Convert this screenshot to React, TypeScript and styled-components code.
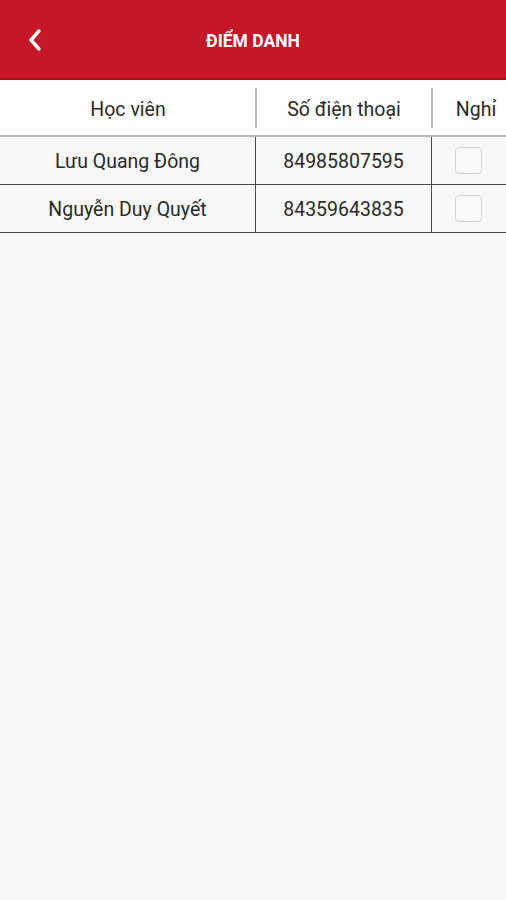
import React from 'react';
import styled, { createGlobalStyle } from 'styled-components';

const GlobalStyle = createGlobalStyle`
  html, body {
    margin: 0;
    padding: 0;
    background: #f8f8f8;
  }
  body {
    font-family: Roboto, "Noto Sans", "Liberation Sans", sans-serif;
  }
`;

interface Student {
  name: string;
  phone: string;
}

const students: Student[] = [
  { name: 'Lưu Quang Đông', phone: '84985807595' },
  { name: 'Nguyễn Duy Quyết', phone: '84359643835' },
];

const Page = styled.div`
  width: 506px;
  min-height: 900px;
  background: #f8f8f8;
  overflow: hidden;
`;

const TopBar = styled.header`
  height: 78px;
  background: #c41828;
  border-bottom: 2px solid #a8121f;
  display: flex;
  align-items: center;
  justify-content: center;
  position: relative;
`;

const BackButton = styled.button`
  position: absolute;
  left: 20px;
  top: 24px;
  width: 30px;
  height: 32px;
  padding: 0;
  border: 0;
  background: transparent;
  display: flex;
  align-items: center;
  justify-content: center;
`;

const Title = styled.h1`
  margin: 0;
  margin-top: 4px;
  color: #fff;
  font-size: 17.5px;
  font-weight: 700;
`;

const Table = styled.div`
  width: 520px;
`;

const Row = styled.div<{ $head?: boolean }>`
  display: grid;
  grid-template-columns: 256px 176px 88px;
  height: ${p => (p.$head ? '55px' : '47px')};
  background: ${p => (p.$head ? '#fdfdfd' : 'transparent')};
  border-bottom: ${p => (p.$head ? '2px solid #b8b8b8' : '1px solid #4a4a4a')};
`;

const Cell = styled.div<{ $head?: boolean; $divider?: boolean }>`
  display: flex;
  align-items: center;
  justify-content: center;
  font-size: 19.5px;
  color: #2a2a2a;
  position: relative;
  border-right: ${p => (p.$divider && !p.$head ? '1px solid #4a4a4a' : 'none')};
  padding-top: ${p => (p.$head ? '4px' : '2px')};

  ${p =>
    p.$divider && p.$head
      ? `&::after {
          content: '';
          position: absolute;
          right: -1px;
          top: 8px;
          bottom: 7px;
          width: 2px;
          background: #bdbdbd;
        }`
      : ''}
`;

const CheckCell = styled(Cell)`
  justify-content: flex-start;
  padding-left: 23px;
  padding-top: 0;
`;

const Checkbox = styled.span`
  width: 27px;
  height: 27px;
  box-sizing: border-box;
  border: 1.5px solid #d4d4d4;
  border-radius: 4px;
  background: #fafafa;
`;

const App: React.FC = () => (
  <Page>
    <GlobalStyle />
    <TopBar>
      <BackButton aria-label="Quay lại">
        <svg width="16" height="24" viewBox="0 0 16 24">
          <path
            d="M12 3 L4 12 L12 21"
            fill="none"
            stroke="#fff"
            strokeWidth="3.4"
            strokeLinecap="round"
            strokeLinejoin="round"
          />
        </svg>
      </BackButton>
      <Title>ĐIỂM DANH</Title>
    </TopBar>
    <Table>
      <Row $head>
        <Cell $head $divider>Học viên</Cell>
        <Cell $head $divider>Số điện thoại</Cell>
        <Cell $head>Nghỉ</Cell>
      </Row>
      {students.map(s => (
        <Row key={s.phone}>
          <Cell $divider>{s.name}</Cell>
          <Cell $divider>{s.phone}</Cell>
          <CheckCell>
            <Checkbox />
          </CheckCell>
        </Row>
      ))}
    </Table>
  </Page>
);

export default App;
